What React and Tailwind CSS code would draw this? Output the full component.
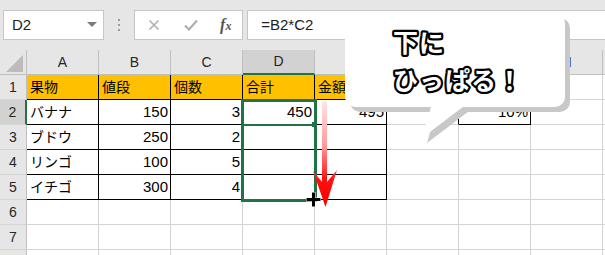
import React from 'react';

const COLS = ['A', 'B', 'C', 'D', 'E', 'F', 'G', 'H', 'I'];

const ROWS = [
  ['果物', '値段', '個数', '合計', '金額', '', '', '', ''],
  ['バナナ', '150', '3', '450', '495', '', '10%', '', ''],
  ['ブドウ', '250', '2', '', '', '', '', '', ''],
  ['リンゴ', '100', '5', '', '', '', '', '', ''],
  ['イチゴ', '300', '4', '', '', '', '', '', ''],
  ['', '', '', '', '', '', '', '', ''],
  ['', '', '', '', '', '', '', '', ''],
  ['', '', '', '', '', '', '', '', ''],
];

const isNumeric = (v) => /^[0-9.%]+$/.test(v);

// black table borders: A1:E5 plus the lone G2 cell
const blackRight = (r, c) => (r >= 1 && r <= 5 && c <= 4) || (r === 2 && (c === 5 || c === 6));
const blackBottom = (r, c) => (r >= 1 && r <= 5 && c <= 4) || ((r === 1 || r === 2) && c === 6);

function Cell({ value, r, c }) {
  const numeric = isNumeric(value);
  return (
    <div
      className={[
        'h-[25px] box-border border-r border-b flex items-center overflow-hidden whitespace-nowrap text-black',
        blackRight(r, c) ? 'border-r-black' : 'border-r-[#d4d4d4]',
        blackBottom(r, c) ? 'border-b-black' : 'border-b-[#d4d4d4]',
        r === 1 && c <= 6 ? 'bg-[#ffc000]' : 'bg-white',
        numeric ? 'justify-end pr-[2px] text-[15px]' : 'justify-start pl-[3px] text-[14px]',
      ].join(' ')}
    >
      {value}
    </div>
  );
}

function Sheet() {
  return (
    <div className="grid grid-cols-[27px_repeat(9,72px)]">
      {/* corner */}
      <div className="h-[25px] box-border border-r border-b border-[#bfbfbf] bg-[#e6e6e6]">
        <svg width="27" height="25" className="block">
          <polygon points="23,5 23,22 6,22" fill="#bcbcbc" />
        </svg>
      </div>
      {COLS.map((col) => (
        <div
          key={col}
          className={
            col === 'D'
              ? 'h-[25px] box-border border-r border-r-[#bfbfbf] border-b-2 border-b-[#217346] bg-[#d2d2d2] flex items-center justify-center text-[14px] text-[#262626]'
              : 'h-[25px] box-border border-r border-b border-[#bfbfbf] bg-[#e6e6e6] flex items-center justify-center text-[14px] text-[#262626]'
          }
        >
          {col}
        </div>
      ))}

      {ROWS.map((row, i) => {
        const r = i + 1;
        return (
          <React.Fragment key={r}>
            <div
              className={
                r === 2
                  ? 'h-[25px] box-border border-r-2 border-r-[#217346] border-b border-b-[#d4d4d4] bg-[#d2d2d2] flex items-center justify-center text-[14px] text-[#262626]'
                  : 'h-[25px] box-border border-r border-r-[#bfbfbf] border-b border-b-[#d4d4d4] bg-[#e6e6e6] flex items-center justify-center text-[14px] text-[#262626]'
              }
            >
              {r}
            </div>
            {row.map((v, c) => (
              <Cell key={c} value={v} r={r} c={c} />
            ))}
          </React.Fragment>
        );
      })}
    </div>
  );
}

function FormulaBar() {
  return (
    <div className="flex h-[50px] items-start pt-[10px] pl-[3px]">
      <div className="w-[102px] h-[30px] box-border bg-white border border-[#c6c6c6] flex items-center justify-between pl-[8px] pr-[6px]">
        <span className="text-[15px] text-[#222]">D2</span>
        <svg width="10" height="6">
          <polygon points="0,0 10,0 5,5" fill="#7a7a7a" />
        </svg>
      </div>
      <div className="w-[30px] h-[30px] flex flex-col items-center justify-center gap-[3px]">
        <span className="w-[2px] h-[2px] bg-[#9c9c9c]" />
        <span className="w-[2px] h-[2px] bg-[#9c9c9c]" />
        <span className="w-[2px] h-[2px] bg-[#9c9c9c]" />
      </div>
      <div className="w-[109px] h-[30px] box-border bg-white border border-[#c6c6c6] flex items-center">
        <span className="w-[37px] flex justify-center">
          <svg width="12" height="12">
            <path d="M1.5 1.5 L10.5 10.5 M10.5 1.5 L1.5 10.5" stroke="#b0b0b0" strokeWidth="1.6" fill="none" />
          </svg>
        </span>
        <span className="w-[37px] flex justify-center">
          <svg width="14" height="12">
            <path d="M1 6.5 L5 10.5 L13 1.5" stroke="#b0b0b0" strokeWidth="2.2" fill="none" />
          </svg>
        </span>
        <span className="w-[33px] flex items-baseline justify-center font-['Liberation_Serif',serif] italic font-bold text-[16px] text-[#555] leading-none">
          <span>f</span>
          <span className="text-[12px]">x</span>
        </span>
      </div>
      <div className="ml-[4px] w-[360px] h-[30px] box-border bg-white border border-r-0 border-[#c6c6c6] flex items-center pl-[13px] text-[15px] text-[#222]">
        =B2*C2
      </div>
    </div>
  );
}

function Overlay() {
  return (
    <svg className="absolute inset-0 pointer-events-none" width="605" height="255">
      <defs>
        <linearGradient id="arrowGrad" gradientUnits="userSpaceOnUse" x1="0" y1="100" x2="0" y2="200">
          <stop offset="0" stopColor="#ffe8e8" />
          <stop offset="0.45" stopColor="#ff9a9a" />
          <stop offset="0.8" stopColor="#ff1010" />
          <stop offset="1" stopColor="#ff0000" />
        </linearGradient>
      </defs>

      {/* drag arrow */}
      <rect x="322" y="101" width="5" height="84" fill="url(#arrowGrad)" />
      <path d="M313 171 L324.5 185 L337 170 L325.5 207 Z" fill="url(#arrowGrad)" />

      {/* fill cursor */}
      <rect x="306" y="197.5" width="15" height="4" fill="#fff" />
      <rect x="311.5" y="192" width="4" height="15" fill="#fff" />
      <rect x="306.5" y="198" width="14" height="3" fill="#000" />
      <rect x="312" y="192.5" width="3" height="14" fill="#000" />

      {/* callout shadow */}
      <g transform="translate(5 5)" fill="#c8c8c8">
        <rect x="345" y="13" width="220" height="94" rx="10" />
        <polygon points="433,100 472,100 422,138" />
      </g>
      {/* callout body */}
      <g fill="#ffffff">
        <rect x="345" y="13" width="220" height="94" rx="10" />
        <polygon points="433,100 472,100 422,138" />
      </g>
      <g
        fontFamily="'Noto Sans CJK JP', sans-serif"
        fontWeight="700"
        fontSize="25"
        fill="#ffffff"
        stroke="#000000"
        strokeWidth="4.5"
        strokeLinejoin="round"
        paintOrder="stroke"
        letterSpacing="1"
      >
        <text x="393" y="52">下に</text>
        <text x="393" y="90">ひっぱる！</text>
      </g>
    </svg>
  );
}

export default function App() {
  return (
    <div className="relative w-[605px] h-[255px] overflow-hidden bg-[#e6e6e6] font-['Liberation_Sans','Noto_Sans_CJK_JP',sans-serif]">
      <FormulaBar />
      <Sheet />

      {/* selection range D2:D5 */}
      <div className="absolute left-[241px] top-[99px] w-[76px] h-[103px] border-[3px] border-[#217346] pointer-events-none" />
      <div className="absolute left-[242px] top-[124px] w-[73px] h-[2px] bg-[#217346] pointer-events-none" />
      <div className="absolute left-[312px] top-[122px] w-[5px] h-[5px] bg-[#217346] pointer-events-none" />

      <Overlay />
    </div>
  );
}
